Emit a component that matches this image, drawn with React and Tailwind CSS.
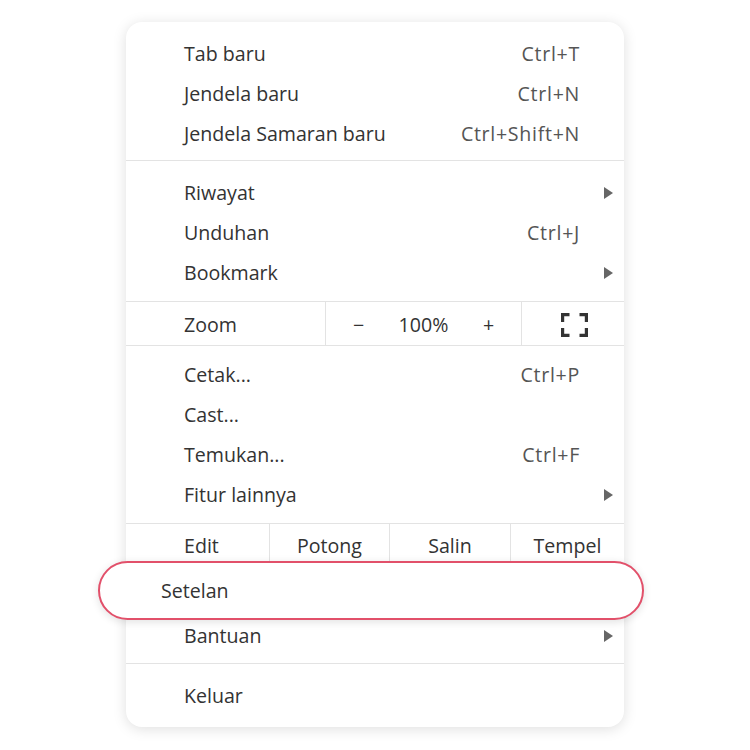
const Arrow = () => (
  <svg width="9" height="12" viewBox="0 0 9 12" className="fill-[#666]">
    <path d="M0 0 L9 6 L0 12 Z" />
  </svg>
)

const FullscreenIcon = () => (
  <svg width="27" height="24" viewBox="0 0 27 24" fill="none" stroke="#333" strokeWidth="3.2">
    <path d="M1.6 9 V1.6 H8.5" />
    <path d="M18.5 1.6 H25.4 V9" />
    <path d="M1.6 15 V22.4 H8.5" />
    <path d="M18.5 22.4 H25.4 V15" />
  </svg>
)

const Row = ({ label, shortcut, arrow }) => (
  <div className="flex h-[40px] items-center pl-[58px]">
    <span className="flex-1 text-[#333]">{label}</span>
    {shortcut && <span className="tracking-[0.7px] text-[#555]">{shortcut}</span>}
    <div className="flex w-[44px] justify-end pr-[11px]">{arrow && <Arrow />}</div>
  </div>
)

const Sep = () => <div className="h-px bg-[#e3e3e3]" />

export default function App() {
  return (
    <div className="flex min-h-[750px] justify-center bg-white pt-[22px] font-['Open_Sans',sans-serif] text-[19.6px]">
      <div className="h-[705px] w-[498px] rounded-[16px] bg-white shadow-[0_2px_14px_rgba(0,0,0,0.13)]">
        <div className="pt-[12px] pb-[6px]">
          <Row label="Tab baru" shortcut="Ctrl+T" />
          <Row label="Jendela baru" shortcut="Ctrl+N" />
          <Row label="Jendela Samaran baru" shortcut="Ctrl+Shift+N" />
        </div>
        <Sep />
        <div className="pt-[12px] pb-[8px]">
          <Row label="Riwayat" arrow />
          <Row label="Unduhan" shortcut="Ctrl+J" />
          <Row label="Bookmark" arrow />
        </div>
        <Sep />
        <div className="flex h-[43px] items-center text-[#333]">
          <div className="flex h-full w-[200px] items-center border-r border-[#e3e3e3] pt-[3px] pl-[58px]">Zoom</div>
          <div className="grid h-full w-[196px] grid-cols-3 items-center border-r border-[#e3e3e3] pt-[3px] text-center">
            <span>−</span>
            <span>100%</span>
            <span>+</span>
          </div>
          <div className="flex h-full flex-1 items-center justify-center pt-[2px] pl-[2px]">
            <FullscreenIcon />
          </div>
        </div>
        <Sep />
        <div className="pt-[9px] pb-[8px]">
          <Row label="Cetak..." shortcut="Ctrl+P" />
          <Row label="Cast..." />
          <Row label="Temukan..." shortcut="Ctrl+F" />
          <Row label="Fitur lainnya" arrow />
        </div>
        <Sep />
        <div className="flex h-[44px] items-center text-[#333]">
          <div className="flex h-full w-[144px] items-center border-r border-[#e3e3e3] pl-[58px]">Edit</div>
          <div className="flex h-full w-[120px] items-center justify-center border-r border-[#e3e3e3]">Potong</div>
          <div className="flex h-full w-[121px] items-center justify-center border-r border-[#e3e3e3]">Salin</div>
          <div className="flex h-full flex-1 items-center justify-center">Tempel</div>
        </div>
        <div className="pb-[7px]">
          <div className="relative h-[48px]">
            <div className="absolute top-[-7px] right-[-20px] bottom-[-4px] left-[-28px] flex items-center rounded-full border-[2.5px] border-[#e2506a] bg-white pl-[61px] text-[#333] shadow-[0_2px_8px_rgba(0,0,0,0.12)]">
              Setelan
            </div>
          </div>
          <Row label="Bantuan" arrow />
        </div>
        <Sep />
        <div className="pt-[12px]">
          <Row label="Keluar" />
        </div>
      </div>
    </div>
  )
}
